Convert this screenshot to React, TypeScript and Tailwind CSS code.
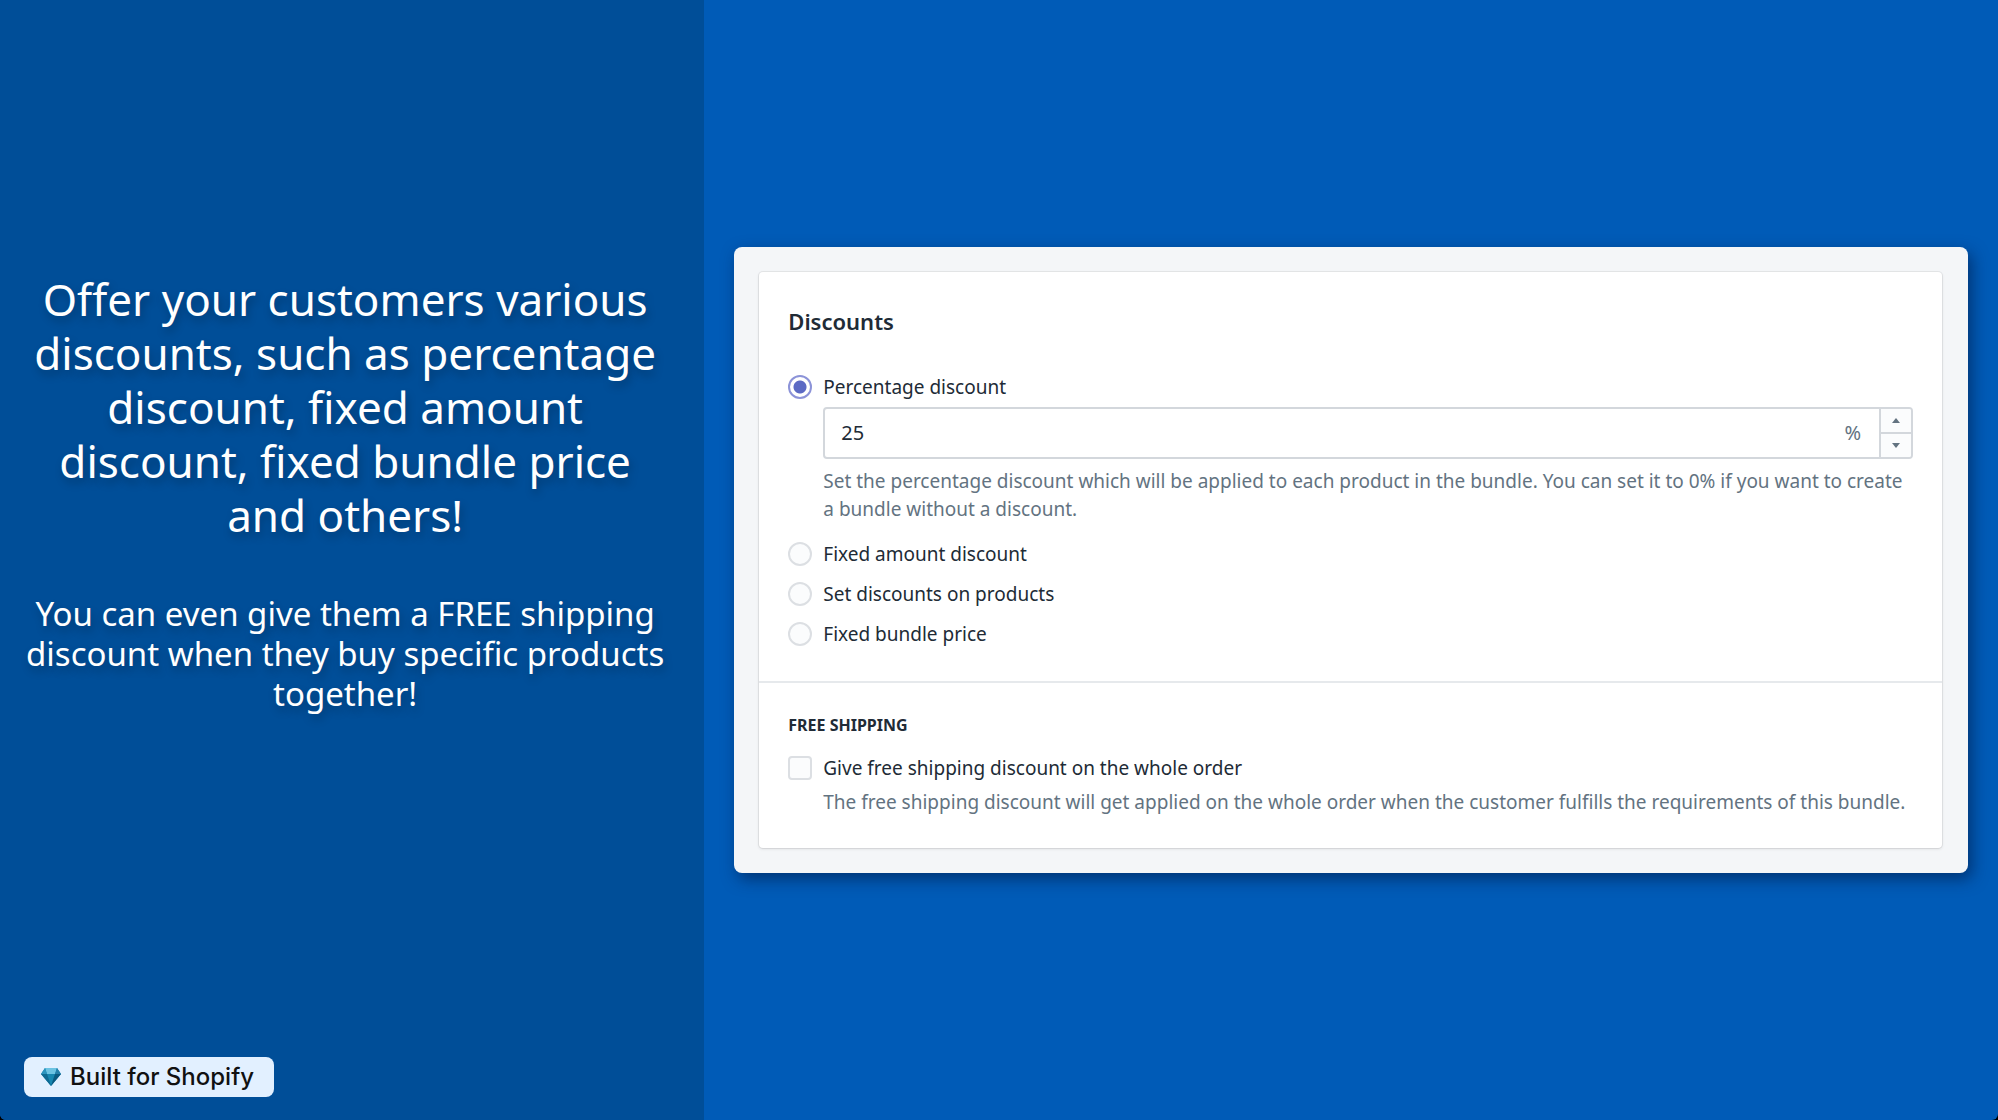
import { useState } from 'react';

const OPTIONS = [
  { id: 'percentage', label: 'Percentage discount' },
  { id: 'fixed-amount', label: 'Fixed amount discount' },
  { id: 'per-product', label: 'Set discounts on products' },
  { id: 'bundle-price', label: 'Fixed bundle price' },
];

const Diamond = () => (
  <svg viewBox="0 0 20 18" className="w-5 h-[18px] shrink-0" aria-hidden="true">
    <path d="M4 0h12l4 6-10 12L0 6z" fill="#0d7fae" />
    <path d="M4 0h12l-2 6H6z" fill="#6cc3e2" />
    <path d="M4 0 0 6h6z" fill="#2b94bd" />
    <path d="m16 0 4 6h-6z" fill="#2580aa" />
    <path d="M6 6h8l-4 12z" fill="#1787b0" />
    <path d="M0 6h6l4 12z" fill="#0e6a92" />
    <path d="M20 6h-6l-4 12z" fill="#0b5a80" />
  </svg>
);

const PercentageField = ({ value, onChange }: { value: number; onChange: (v: number) => void }) => (
  <div className="mt-[6px]">
    <div className="flex h-[52px] rounded-[4px] border-2 border-[#d3d7dc] bg-white overflow-hidden">
      <input
        type="text"
        inputMode="numeric"
        aria-label="Percentage discount value"
        aria-describedby="percentage-help"
        value={value}
        onChange={(e) => onChange(Number(e.target.value) || 0)}
        className="flex-1 min-w-0 px-4 text-xl text-[#212b36] outline-none"
      />
      <span className="flex items-center pr-[18px] text-xl text-[#637381]">%</span>
      <div className="flex flex-col w-8 border-l-2 border-[#d3d7dc] bg-[#fbfcfd]">
        <button
          type="button"
          aria-label="Increase"
          onClick={() => onChange(Math.min(100, value + 1))}
          className="flex-1 flex items-center justify-center border-b-2 border-[#d3d7dc]"
        >
          <svg viewBox="0 0 8 5" className="w-2 h-[5px]"><path d="M4 0l4 5H0z" fill="#637381" /></svg>
        </button>
        <button
          type="button"
          aria-label="Decrease"
          onClick={() => onChange(Math.max(0, value - 1))}
          className="flex-1 flex items-center justify-center"
        >
          <svg viewBox="0 0 8 5" className="w-2 h-[5px]"><path d="M4 5l4-5H0z" fill="#637381" /></svg>
        </button>
      </div>
    </div>
    <p id="percentage-help" className="mt-2 mb-[5px] text-[19px] leading-7 text-[#637381]">
      Set the percentage discount which will be applied to each product in the bundle. You can set it to 0% if you want
      to create a bundle without a discount.
    </p>
  </div>
);

const DiscountsCard = () => {
  const [selected, setSelected] = useState('percentage');
  const [percent, setPercent] = useState(25);
  const [freeShipping, setFreeShipping] = useState(false);

  return (
    <div className="w-full rounded-lg bg-[#f4f6f8] py-[25px] pl-[25px] pr-[26px] shadow-[4px_6px_16px_rgba(0,20,60,0.55)]">
      <div className="rounded-[4px] bg-white shadow-[0_0_0_1px_rgba(63,63,68,0.08),0_1px_3px_rgba(63,63,68,0.15)]">
        <section className="px-[29px] py-[33px]">
          <h2 className="text-[22px] leading-8 font-semibold text-[#212b36]">Discounts</h2>
          <div className="mt-9 flex flex-col gap-3">
            {OPTIONS.map((option) => (
              <div key={option.id}>
                <div className="flex items-center gap-[11px]">
                  <input
                    type="radio"
                    name="discount-type"
                    id={option.id}
                    checked={selected === option.id}
                    onChange={() => setSelected(option.id)}
                    className="appearance-none w-6 h-6 shrink-0 rounded-full border-2 border-[#dcdfe3] bg-[#fbfcfd] checked:border-[#8c93d8] checked:bg-white checked:bg-[radial-gradient(circle,#5c6ac4_6px,transparent_7px)]"
                  />
                  <label htmlFor={option.id} className="text-[19px] leading-7 text-[#212b36]">
                    {option.label}
                  </label>
                </div>
                {option.id === 'percentage' && selected === 'percentage' && (
                  <div className="pl-[35px]">
                    <PercentageField value={percent} onChange={setPercent} />
                  </div>
                )}
              </div>
            ))}
          </div>
        </section>

        <section className="border-t-2 border-[#e6e9ec] px-[29px] pt-7 pb-8">
          <h3 className="text-base leading-7 font-bold uppercase text-[#212b36]">Free shipping</h3>
          <div className="mt-[15px] flex items-center gap-[11px]">
            <input
              type="checkbox"
              id="free-shipping"
              aria-describedby="free-shipping-help"
              checked={freeShipping}
              onChange={(e) => setFreeShipping(e.target.checked)}
              className="appearance-none w-6 h-6 shrink-0 rounded-[4px] border-2 border-[#dcdfe3] bg-[#fbfcfd] checked:bg-[#5c6ac4]"
            />
            <label htmlFor="free-shipping" className="text-[19px] leading-7 text-[#212b36]">
              Give free shipping discount on the whole order
            </label>
          </div>
          <p id="free-shipping-help" className="mt-[6px] pl-[35px] text-[19px] leading-7 text-[#637381]">
            The free shipping discount will get applied on the whole order when the customer fulfills the requirements
            of this bundle.
          </p>
        </section>
      </div>
    </div>
  );
};

const App = () => {
  return (
    <div className="bg-black font-['Noto_Sans',sans-serif]">
      <div className="min-h-screen flex rounded-b-md overflow-hidden bg-[#005bb7]">
        <aside className="w-[35.25%] shrink-0 flex flex-col bg-[#004e98] pt-[272px] pb-[23px]">
          <div className="pl-4 pr-[30px] text-center text-white [text-shadow:2px_5px_8px_rgba(0,0,0,0.25)]">
            <h1 className="text-[44px] leading-[54px]">
              Offer your customers various discounts, such as percentage discount, fixed amount discount, fixed bundle
              price and others!
            </h1>
            <p className="mt-[52px] text-[33px] leading-10">
              You can even give them a FREE shipping discount when they buy specific products together!
            </p>
          </div>
          <div className="mt-auto ml-6 self-start flex items-center gap-[9px] h-10 rounded-lg bg-[#e2f0ff] pl-[17px] pr-5 text-2xl font-medium text-[#111] font-['Inter',sans-serif]">
            <Diamond />
            Built for Shopify
          </div>
        </aside>
        <main className="flex-1 min-w-0 flex items-center px-[30px]">
          <DiscountsCard />
        </main>
      </div>
    </div>
  );
};

export default App;
